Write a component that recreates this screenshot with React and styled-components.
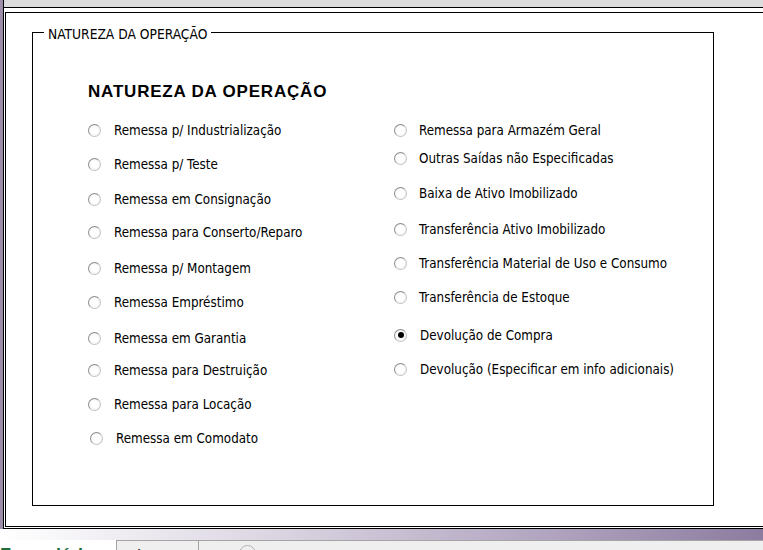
import styled, { createGlobalStyle } from "styled-components";

const GlobalStyle = createGlobalStyle`
  html, body {
    margin: 0;
    padding: 0;
    background: #FFFFFF;
    overflow: hidden;
  }
`;

const Page = styled.div`
  width: 763px;
  height: 550px;
  display: flex;
  flex-direction: column;
  overflow: hidden;
`;

const TopRow = styled.div`
  height: 529px;
  display: flex;
  flex-direction: row;
`;

const Strip = styled.div`
  width: 3px;
  background: #9b8ca9;
`;

const Main = styled.div`
  flex: 1;
  display: flex;
  flex-direction: column;
  border-left: 1px solid #000;
`;

const TitleBand = styled.div`
  height: 7px;
  background: #dcdcdc;
`;

const Outer = styled.div`
  flex: 1;
  display: flex;
  border-top: 1px solid #000;
  border-bottom: 1px solid #000;
  padding: 4px 0 1px 1px;
`;

const Inner = styled.div`
  flex: 1;
  display: flex;
  flex-direction: column;
  align-items: flex-start;
  border-top: 1px solid #000;
  border-left: 1px solid #000;
  border-bottom: 1px solid #000;
`;

const Frame = styled.fieldset`
  box-sizing: border-box;
  width: 682px;
  flex: 1;
  margin: 10px 0 20px 26px;
  padding: 0;
  border: 1px solid #000;
  min-inline-size: auto;
`;

const Legend = styled.legend`
  margin-left: 11px;
  padding: 4px 4px 0 4px;
  font-family: "DejaVu Sans Condensed", "Liberation Sans", sans-serif;
  font-size: 13.7px;
  line-height: 14px;
  color: #000;
`;

const Body = styled.div`
  padding-left: 55px;
`;

const Heading = styled.h2`
  margin: 41px 0 0 0;
  height: 20px;
  display: flex;
  align-items: center;
  font-family: "Liberation Sans", Arial, sans-serif;
  font-weight: bold;
  font-size: 17px;
  letter-spacing: 0.8px;
  color: #000;
`;

const Columns = styled.div`
  margin-top: 18px;
  display: grid;
  grid-template-columns: 306px 1fr;
`;

const Column = styled.div`
  display: flex;
  flex-direction: column;
`;

const Option = styled.label`
  height: 20px;
  margin-top: ${(p) => p.$top || 0}px;
  padding-left: ${(p) => p.$shift || 0}px;
  display: flex;
  align-items: center;
  gap: ${(p) => p.$gap || 13}px;
  font-family: "DejaVu Sans Condensed", "Liberation Sans", sans-serif;
  font-size: 13.3px;
  color: #000;
  white-space: nowrap;
`;

const Radio = styled.span`
  box-sizing: border-box;
  width: 13px;
  height: 13px;
  border-radius: 50%;
  border: 1px solid #8e8e8e;
  border-bottom-color: #c4c4c4;
  border-right-color: #c4c4c4;
  background: radial-gradient(circle at 50% 50%, #ffffff 45%, #e2e2e2 100%);
  position: relative;
  flex-shrink: 0;

  &::after {
    content: "";
    display: ${(p) => (p.$checked ? "block" : "none")};
    position: absolute;
    left: 2.5px;
    top: 2.5px;
    width: 6px;
    height: 6px;
    border-radius: 50%;
    background: #000;
  }
`;

const Gradient = styled.div`
  height: 11px;
  background: linear-gradient(to right, #ffffff 0%, #dcd6e2 35%, #b9aec6 65%, #8c7ca0 100%);
`;

const BottomStrip = styled.div`
  height: 10px;
  display: flex;
  flex-direction: row;
  overflow: hidden;
  background: #ffffff;
`;

const GreenTitle = styled.div`
  width: 116px;
  padding-top: 5px;
  font-family: "Liberation Sans", Arial, sans-serif;
  font-weight: bold;
  font-size: 18px;
  line-height: 20px;
  color: #1e6e3c;
  white-space: nowrap;
  overflow: hidden;
`;

const TabBar = styled.div`
  flex: 1;
  display: flex;
  background: #efefef;
  border-top: 1px solid #a3a3a3;
  border-left: 1px solid #a3a3a3;
`;

const Tab = styled.div`
  width: 82px;
  padding: 6px 0 0 18px;
  box-sizing: border-box;
  border-right: 1px solid #a3a3a3;
  font-family: "Liberation Sans", Arial, sans-serif;
  font-size: 12px;
  line-height: 14px;
  color: #333;
`;

const TabIcon = styled.div`
  margin: 4px 0 0 40px;
  width: 15px;
  height: 15px;
  border-radius: 50%;
  border: 1px solid #b5b5b5;
`;

const leftOptions = [
  { label: "Remessa p/ Industrialização", top: 0 },
  { label: "Remessa p/ Teste", top: 14 },
  { label: "Remessa em Consignação", top: 15 },
  { label: "Remessa para Conserto/Reparo", top: 13 },
  { label: "Remessa p/ Montagem", top: 16 },
  { label: "Remessa Empréstimo", top: 14 },
  { label: "Remessa em Garantia", top: 16 },
  { label: "Remessa para Destruição", top: 12 },
  { label: "Remessa para Locação", top: 14 },
  { label: "Remessa em Comodato", top: 14, shift: 2 },
];

const rightOptions = [
  { label: "Remessa para Armazém Geral", top: 0, gap: 12 },
  { label: "Outras Saídas não Especificadas", top: 8, gap: 12 },
  { label: "Baixa de Ativo Imobilizado", top: 15, gap: 12 },
  { label: "Transferência Ativo Imobilizado", top: 16, gap: 12 },
  { label: "Transferência Material de Uso e Consumo", top: 14, gap: 12 },
  { label: "Transferência de Estoque", top: 14, gap: 12 },
  { label: "Devolução de Compra", top: 18, checked: true, gap: 13 },
  { label: "Devolução (Especificar em info adicionais)", top: 14, gap: 13 },
];

function OptionList({ items }) {
  return (
    <Column>
      {items.map((el) => (
        <Option key={el.label} $top={el.top} $shift={el.shift} $gap={el.gap}>
          <Radio $checked={el.checked} />
          {el.label}
        </Option>
      ))}
    </Column>
  );
}

function App() {
  return (
    <>
      <GlobalStyle />
      <Page>
        <TopRow>
          <Strip />
          <Main>
            <TitleBand />
            <Outer>
              <Inner>
                <Frame>
                  <Legend>NATUREZA DA OPERAÇÃO</Legend>
                  <Body>
                    <Heading>NATUREZA DA OPERAÇÃO</Heading>
                    <Columns>
                      <OptionList items={leftOptions} />
                      <OptionList items={rightOptions} />
                    </Columns>
                  </Body>
                </Frame>
              </Inner>
            </Outer>
          </Main>
        </TopRow>
        <Gradient />
        <BottomStrip>
          <GreenTitle>Formulário</GreenTitle>
          <TabBar>
            <Tab>A</Tab>
            <TabIcon />
          </TabBar>
        </BottomStrip>
      </Page>
    </>
  );
}

export default App;
